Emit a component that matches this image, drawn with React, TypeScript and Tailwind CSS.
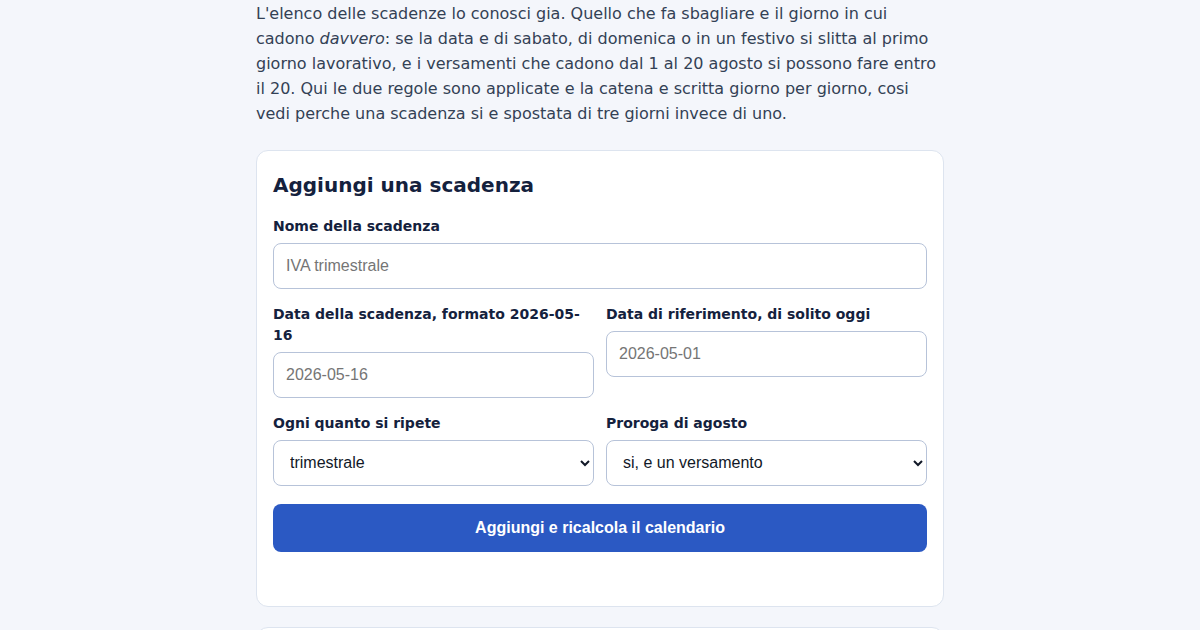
import React from "react";

const fieldClass =
  "h-[46px] w-full rounded-lg border border-[#b7c3d9] bg-white px-3 font-['Liberation_Sans',Arial,sans-serif] text-base text-[#111827] placeholder:text-[#757575] outline-none";

function Field({ label, placeholder }: { label: string; placeholder: string }) {
  return (
    <label className="block">
      <span className="mb-[5.5px] block text-sm font-bold leading-[21px] text-[#14213d]">{label}</span>
      <input className={fieldClass} placeholder={placeholder} />
    </label>
  );
}

function SelectField({ label, options }: { label: string; options: string[] }) {
  return (
    <label className="block">
      <span className="mb-[5.5px] block text-sm font-bold leading-[21px] text-[#14213d]">{label}</span>
      <select className={fieldClass}>
        {options.map((o) => (
          <option key={o}>{o}</option>
        ))}
      </select>
    </label>
  );
}

export default function App() {
  return (
    <div className="min-h-[630px] overflow-hidden bg-[#f4f6fb] font-['DejaVu_Sans',sans-serif]">
      <div className="mx-auto w-[688px]">
        <p className="mb-[24px] pt-px text-base leading-[25px] text-[#334155]">
          L'elenco delle scadenze lo conosci gia. Quello che fa sbagliare e il giorno in cui cadono{" "}
          <em>davvero</em>: se la data e di sabato, di domenica o in un festivo si slitta al primo giorno
          lavorativo, e i versamenti che cadono dal 1 al 20 agosto si possono fare entro il 20. Qui le due
          regole sono applicate e la catena e scritta giorno per giorno, cosi vedi perche una scadenza si e
          spostata di tre giorni invece di uno.
        </p>

        {/* Form card */}
        <div className="rounded-xl border border-[#dde4ef] bg-white px-4 pb-[54px] pt-[22px]">
          <h2 className="mb-[19px] text-xl font-bold leading-6 text-[#14213d]">Aggiungi una scadenza</h2>

          <div className="mb-[15.5px]">
            <Field label="Nome della scadenza" placeholder="IVA trimestrale" />
          </div>

          <div className="mb-[15.5px] grid grid-cols-2 items-start gap-3">
            <Field label="Data della scadenza, formato 2026-05-16" placeholder="2026-05-16" />
            <Field label="Data di riferimento, di solito oggi" placeholder="2026-05-01" />
          </div>

          <div className="grid grid-cols-2 gap-3">
            <SelectField label="Ogni quanto si ripete" options={["trimestrale", "mensile", "annuale", "una tantum"]} />
            <SelectField label="Proroga di agosto" options={["si, e un versamento", "no"]} />
          </div>

          <button
            type="button"
            className="mt-[18px] h-12 w-full rounded-lg bg-[#2b59c3] font-['Liberation_Sans',Arial,sans-serif] text-base font-bold text-white"
          >
            Aggiungi e ricalcola il calendario
          </button>
        </div>

        {/* Next card, cut off */}
        <div className="mt-5 h-40 rounded-xl border border-[#dde4ef] bg-white" />
      </div>
    </div>
  );
}
